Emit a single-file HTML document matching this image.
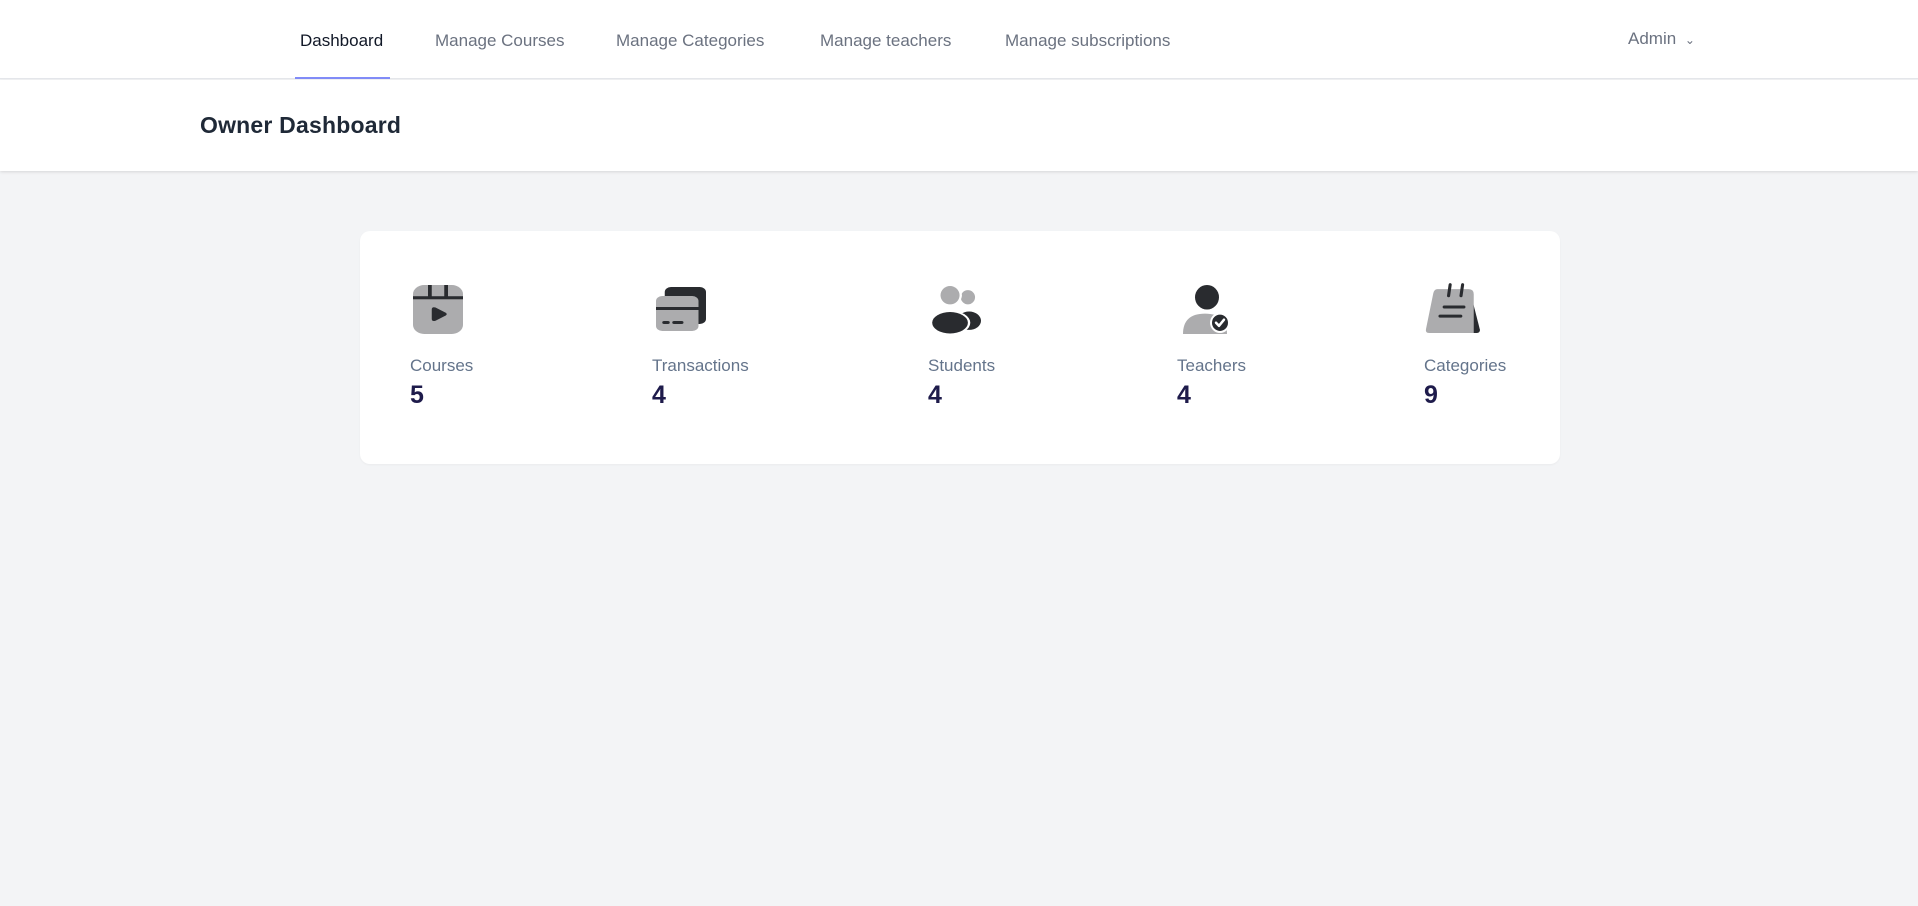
<!DOCTYPE html>
<html><head><style>
*{margin:0;padding:0;box-sizing:border-box}
body{width:1918px;height:906px;background:#f3f4f6;font-family:"Liberation Sans",sans-serif;position:relative;overflow:hidden}
.nav{position:absolute;left:0;top:0;width:1918px;height:79px;background:#fff;border-bottom:1px solid #e5e7eb}
.nav a{position:absolute;top:31px;font-size:17px;color:#6b7280;text-decoration:none;white-space:nowrap}
.ul{position:absolute;left:295px;top:77px;width:95px;height:2px;background:#818cf8}
.hdr{position:absolute;left:0;top:80px;width:1918px;height:91px;background:#fff;box-shadow:0 1px 3px rgba(0,0,0,.12)}
.hdr h2{position:absolute;left:200px;top:32px;font-size:23px;font-weight:600;color:#1f2937;letter-spacing:.2px}
.card{position:absolute;left:360px;top:231px;width:1200px;height:233px;background:#fff;border-radius:10px;box-shadow:0 1px 2px rgba(0,0,0,.04)}
.lb{position:absolute;top:125px;font-size:17px;color:#64748b;white-space:nowrap}
.nm{position:absolute;top:150px;font-size:25px;font-weight:600;color:#1e1b4b}
</style></head><body>
<div class="nav">
<a style="left:300px;color:#111827">Dashboard</a>
<a style="left:435px">Manage Courses</a>
<a style="left:616px">Manage Categories</a>
<a style="left:820px">Manage teachers</a>
<a style="left:1005px">Manage subscriptions</a>
<a style="left:1628px;top:29px">Admin <span style="font-size:12px;margin-left:4px">&#8964;</span></a>
<div class="ul"></div>
</div>
<div class="hdr"><h2>Owner Dashboard</h2></div>
<div class="card">
<svg style="position:absolute;left:53px;top:54px" width="50" height="49" viewBox="0 0 40 48" preserveAspectRatio="none"><rect x="0" y="0" width="40" height="48" rx="9" fill="#acacae"/><rect x="0" y="11" width="40" height="3" fill="#292b2f"/><rect x="12" y="0" width="3" height="12" fill="#292b2f"/><rect x="25" y="0" width="3" height="12" fill="#292b2f"/><path d="M15 24 Q15 21 18 22 L26 27 Q28 28.5 26 30 L18 35 Q15 36 15 33Z" fill="#292b2f"/></svg>
<div class="lb" style="left:50px">Courses</div><div class="nm" style="left:50px">5</div>
<svg style="position:absolute;left:296px;top:56px" width="50" height="44" viewBox="0 0 40 44" preserveAspectRatio="none"><rect x="7" y="0" width="33" height="37" rx="5" fill="#292b2f"/><rect x="0" y="9" width="34" height="35" rx="5" fill="#acacae"/><rect x="0" y="20" width="34" height="3" fill="#292b2f"/><rect x="5" y="34" width="6" height="3" rx="1.5" fill="#292b2f"/><rect x="13" y="34" width="9" height="3" rx="1.5" fill="#292b2f"/></svg>
<div class="lb" style="left:292px">Transactions</div><div class="nm" style="left:292px">4</div>
<svg style="position:absolute;left:571px;top:54px" width="50" height="49" viewBox="0 0 42 48" preserveAspectRatio="none"><ellipse cx="31" cy="12" rx="6" ry="7" fill="#acacae"/><ellipse cx="32" cy="35" rx="10" ry="9" fill="#292b2f"/><ellipse cx="16" cy="10" rx="10" ry="10" fill="#ffffff"/><ellipse cx="16" cy="10" rx="8" ry="9" fill="#acacae"/><ellipse cx="16" cy="37" rx="17" ry="12" fill="#fff"/><ellipse cx="16" cy="37" rx="15" ry="10.5" fill="#292b2f"/></svg>
<div class="lb" style="left:568px">Students</div><div class="nm" style="left:568px">4</div>
<svg style="position:absolute;left:823px;top:54px" width="48" height="49" viewBox="0 0 48 48" preserveAspectRatio="none"><circle cx="24" cy="12" r="12" fill="#292b2f"/><path d="M0 48 Q0 28 22 28 Q44 28 44 48Z" fill="#acacae"/><circle cx="37" cy="37" r="10" fill="#fff"/><circle cx="37" cy="37" r="8" fill="#292b2f"/><path d="M33 37 L36 40 L41 34" stroke="#fff" stroke-width="2.5" fill="none" stroke-linecap="round" stroke-linejoin="round"/></svg>
<div class="lb" style="left:817px">Teachers</div><div class="nm" style="left:817px">4</div>
<svg style="position:absolute;left:1065px;top:52px" width="56" height="51" viewBox="0 0 54 50" preserveAspectRatio="none"><path d="M44 10 L53 46 Q53 49 50 49 L40 49Z" fill="#292b2f"/><path d="M12 6 L42 6 Q47 6 47 11 L47 49 L4 49 Q0 49 1 45 L8 10 Q9 6 12 6Z" fill="#acacae"/><rect x="22" y="0" width="3" height="14" rx="1.5" fill="#292b2f" transform="rotate(8 23 7)"/><rect x="34" y="0" width="3" height="14" rx="1.5" fill="#292b2f" transform="rotate(8 35 7)"/><rect x="17" y="22" width="22" height="3" rx="1.5" fill="#292b2f"/><rect x="13" y="31" width="23" height="3" rx="1.5" fill="#292b2f"/></svg>
<div class="lb" style="left:1064px">Categories</div><div class="nm" style="left:1064px">9</div>
</div>
</body></html>
